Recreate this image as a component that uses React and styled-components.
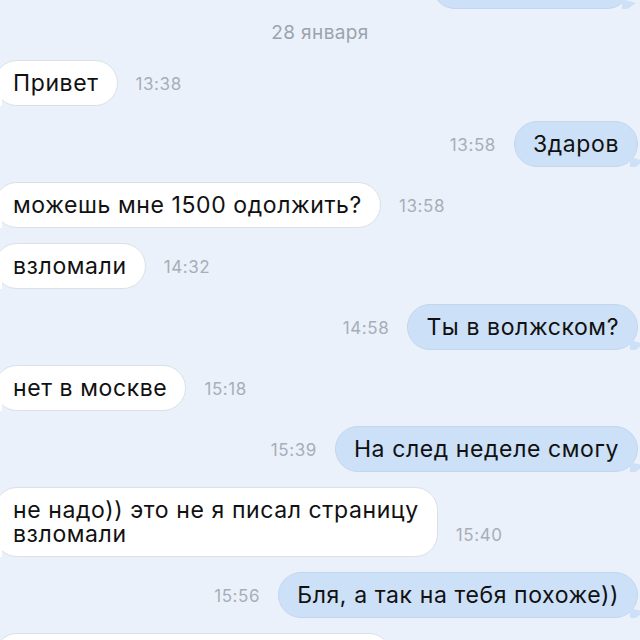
import styled, {createGlobalStyle} from "styled-components";

const GlobalStyle = createGlobalStyle`
    body {
        margin: 0;
        background: #ebf1fa;
        font-family: Inter, "Liberation Sans", Arial, sans-serif;
        overflow: hidden;
    }
`;

const Chat = styled.div`
    display: flex;
    flex-direction: column;
    gap: 15px;
    width: 640px;
    height: 640px;
    overflow: hidden;
`;

const TopPart = styled.div`
    display: flex;
    justify-content: flex-end;
    margin-top: -37px;
    padding-right: 10px;
`;

const DateLabel = styled.div`
    text-align: center;
    color: #9ba3ad;
    font-size: 19px;
    letter-spacing: 0.4px;
    line-height: 22px;
    margin: 13px 0 1px;
`;

const Row = styled.div`
    display: flex;
    align-items: flex-end;
    justify-content: ${p => (p.$out ? "flex-end" : "flex-start")};
    gap: 18px;
    margin-left: ${p => (p.$out ? "0" : "-6px")};
    margin-right: ${p => (p.$out ? "2px" : "0")};
`;

const Bubble = styled.div`
    position: relative;
    background: ${p => (p.$out ? "#cce0f7" : "#ffffff")};
    border: 1px solid ${p => (p.$out ? "#c3d6ee" : "#dbe0e7")};
    border-radius: 23px;
    padding: 10px 18px;
    font-size: 23px;
    line-height: 24px;
    letter-spacing: 0.6px;
    color: #111;
    white-space: pre-line;
    min-height: 24px;
    min-width: ${p => p.$w || "auto"};

    &::after {
        content: "";
        position: absolute;
        bottom: -1px;
        ${p => (p.$out ? "right: -7px;" : "left: -7px;")}
        width: 14px;
        height: 10px;
        background: ${p => (p.$out ? "#cce0f7" : "#ffffff")};
        clip-path: ${p =>
            p.$out
                ? "polygon(0 0, 100% 40%, 40% 100%, 0 100%)"
                : "polygon(100% 0, 0 40%, 60% 100%, 100% 100%)"};
    }
`;

const Time = styled.span`
    color: #a6aeb8;
    font-size: 17px;
    letter-spacing: 0.6px;
    margin-bottom: 12px;
`;

const messages = [
    {text: "Привет", time: "13:38"},
    {text: "Здаров", time: "13:58", out: true},
    {text: "можешь мне 1500 одолжить?", time: "13:58"},
    {text: "взломали", time: "14:32"},
    {text: "Ты в волжском?", time: "14:58", out: true},
    {text: "нет в москве", time: "15:18"},
    {text: "На след неделе смогу", time: "15:39", out: true},
    {text: "не надо)) это не я писал страницу\nвзломали", time: "15:40"},
    {text: "Бля, а так на тебя похоже))", time: "15:56", out: true},
    {text: "\u00a0", time: "", w: "360px"},
];

const App = () => {
    return (
        <>
            <GlobalStyle />
            <Chat>
                <div>
                    <TopPart>
                        <Bubble $out $w="160px">{"\u00a0"}</Bubble>
                    </TopPart>
                    <DateLabel>28 января</DateLabel>
                </div>
                {messages.map((m, i) => (
                    <Row key={i} $out={m.out}>
                        {m.out && <Time>{m.time}</Time>}
                        <Bubble $out={m.out} $w={m.w}>{m.text}</Bubble>
                        {!m.out && <Time>{m.time}</Time>}
                    </Row>
                ))}
            </Chat>
        </>
    );
};

export default App;
